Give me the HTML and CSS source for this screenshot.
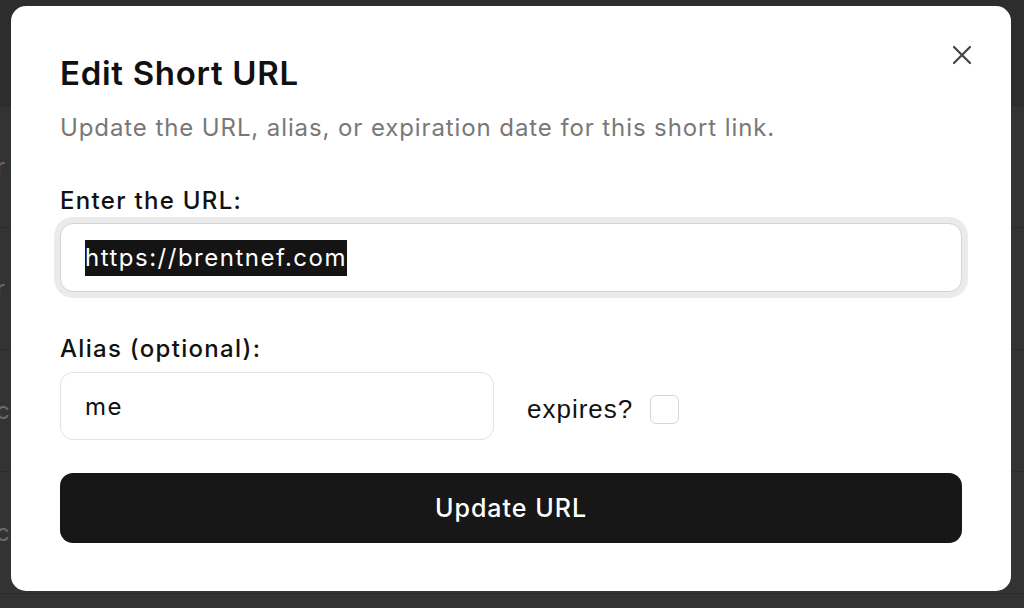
FILE: index.html
```html
<!DOCTYPE html>
<html lang="en">
<head>
<meta charset="utf-8">
<title>Edit Short URL</title>
<link rel="stylesheet" href="styles.css">
</head>
<body>
<div class="page">
  <div class="page-head"></div>
  <div class="page-row"><span class="cell">r</span></div>
  <div class="page-row"><span class="cell">r</span></div>
  <div class="page-row"><span class="cell">c</span></div>
  <div class="page-row"><span class="cell">c</span></div>
</div>

<div class="modal" role="dialog" aria-labelledby="dlg-title">
  <button class="close" aria-label="Close">
    <svg width="20" height="20" viewBox="0 0 20 20" fill="none" stroke="#444" stroke-width="2.2" stroke-linecap="round">
      <path d="M2 2 L18 18 M18 2 L2 18"/>
    </svg>
  </button>
  <h2 class="title" id="dlg-title">Edit Short URL</h2>
  <p class="subtitle">Update the URL, alias, or expiration date for this short link.</p>

  <form class="form">
    <label class="label">Enter the URL:</label>
    <div class="input input-focus"><span class="sel">https://brentnef.com</span></div>

    <label class="label label-alias">Alias (optional):</label>
    <div class="alias-row">
      <div class="input input-alias">me</div>
      <label class="expires">expires? <span class="checkbox"></span></label>
    </div>

    <button type="button" class="submit">Update URL</button>
  </form>
</div>
</body>
</html>
```

FILE: styles.css
```css
html, body {
  margin: 0;
  padding: 0;
  height: 100%;
}
body {
  background: #333333;
  overflow: hidden;
  font-family: "Inter", "Liberation Sans", sans-serif;
}

/* dimmed page behind the dialog */
.page {
  display: flex;
  flex-direction: column;
}
.page-head {
  height: 105px;
  background: #2d2d2d;
  border-bottom: 1px solid #2a2a2a;
}
.page-row {
  height: 121px;
  border-bottom: 1px solid #2c2c2c;
  display: flex;
  align-items: center;
  color: #6a6a6a;
  font-size: 24px;
}
.cell {
  margin-left: -4px;
}

/* dialog */
.modal {
  position: fixed;
  left: 11px;
  top: 6px;
  width: 1000px;
  height: 585px;
  box-sizing: border-box;
  background: #ffffff;
  border-radius: 15px;
  padding: 45px 49px 0 49px;
  color: #111111;
}
.close {
  position: absolute;
  right: 29px;
  top: 29px;
  width: 40px;
  height: 40px;
  border: 0;
  background: transparent;
  padding: 0;
  display: flex;
  align-items: center;
  justify-content: center;
}
.title {
  margin: 0;
  font-size: 33px;
  line-height: 44px;
  font-weight: 600;
  letter-spacing: 0.7px;
  color: #111111;
}
.subtitle {
  margin: 17px 0 0 0;
  font-size: 24px;
  line-height: 32px;
  color: #787878;
  letter-spacing: 0.9px;
}

.form {
  display: flex;
  flex-direction: column;
  margin-top: 41px;
}
.label {
  font-size: 24px;
  line-height: 32px;
  font-weight: 500;
  color: #111111;
  letter-spacing: 1.3px;
}
.label-alias {
  margin-top: 41px;
}
.input {
  box-sizing: border-box;
  height: 68px;
  border: 1px solid #e3e3e3;
  border-radius: 13px;
  padding: 0 24px;
  display: flex;
  align-items: center;
  font-size: 24px;
  letter-spacing: 1.5px;
  color: #111111;
  background: #fff;
}
.input-focus {
  margin-top: 6px;
  height: 69px;
  border-color: #d4d4d4;
  box-shadow: 0 0 0 6px #ebebeb;
}
.sel {
  background: #141414;
  color: #ffffff;
  line-height: 36px;
}
.alias-row {
  display: flex;
  align-items: center;
  margin-top: 7px;
  gap: 33px;
}
.input-alias {
  width: 434px;
}
.expires {
  display: flex;
  align-items: center;
  gap: 17px;
  margin-top: 7px;
  font-family: "Liberation Sans", Arial, sans-serif;
  font-size: 26px;
  letter-spacing: 1px;
  color: #111111;
}
.checkbox {
  width: 29px;
  height: 29px;
  box-sizing: border-box;
  border: 1px solid #d6d6d6;
  border-radius: 6px;
  background: #fff;
}
.submit {
  margin-top: 33px;
  height: 70px;
  border: 0;
  border-radius: 13px;
  background: #171717;
  color: #ffffff;
  font-family: inherit;
  font-size: 25px;
  font-weight: 500;
  letter-spacing: 1px;
}
```
